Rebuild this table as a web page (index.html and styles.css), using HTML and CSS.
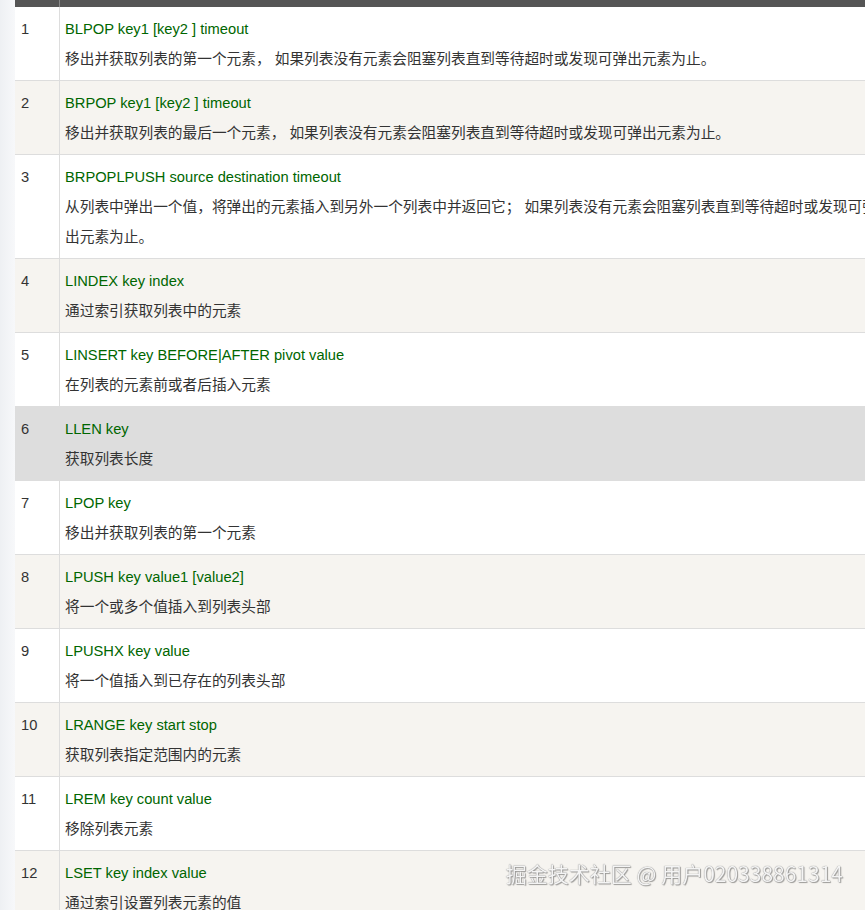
FILE: index.html
```html
<!DOCTYPE html>
<html lang="zh-CN">
<head>
    <meta charset="UTF-8">
    <meta name="viewport" content="width=device-width, initial-scale=1.0">
    <title>Redis 列表命令</title>
    <link rel="stylesheet" href="styles.css">
</head>
<body>
    <div class="page">
        <table class="reference">
            <thead>
                <tr>
                    <th class="num"></th>
                    <th></th>
                </tr>
            </thead>
            <tbody>
                <tr>
                    <td class="num">1</td>
                    <td><a class="cmd">BLPOP key1 [key2 ] timeout</a><div class="desc">移出并获取列表的第一个元素， 如果列表没有元素会阻塞列表直到等待超时或发现可弹出元素为止。</div></td>
                </tr>
                <tr>
                    <td class="num">2</td>
                    <td><a class="cmd">BRPOP key1 [key2 ] timeout</a><div class="desc">移出并获取列表的最后一个元素， 如果列表没有元素会阻塞列表直到等待超时或发现可弹出元素为止。</div></td>
                </tr>
                <tr>
                    <td class="num">3</td>
                    <td><a class="cmd">BRPOPLPUSH source destination timeout</a><div class="desc">从列表中弹出一个值，将弹出的元素插入到另外一个列表中并返回它； 如果列表没有元素会阻塞列表直到等待超时或发现可弹出元素为止。</div></td>
                </tr>
                <tr>
                    <td class="num">4</td>
                    <td><a class="cmd">LINDEX key index</a><div class="desc">通过索引获取列表中的元素</div></td>
                </tr>
                <tr>
                    <td class="num">5</td>
                    <td><a class="cmd">LINSERT key BEFORE|AFTER pivot value</a><div class="desc">在列表的元素前或者后插入元素</div></td>
                </tr>
                <tr class="hover">
                    <td class="num">6</td>
                    <td><a class="cmd">LLEN key</a><div class="desc">获取列表长度</div></td>
                </tr>
                <tr>
                    <td class="num">7</td>
                    <td><a class="cmd">LPOP key</a><div class="desc">移出并获取列表的第一个元素</div></td>
                </tr>
                <tr>
                    <td class="num">8</td>
                    <td><a class="cmd">LPUSH key value1 [value2]</a><div class="desc">将一个或多个值插入到列表头部</div></td>
                </tr>
                <tr>
                    <td class="num">9</td>
                    <td><a class="cmd">LPUSHX key value</a><div class="desc">将一个值插入到已存在的列表头部</div></td>
                </tr>
                <tr>
                    <td class="num">10</td>
                    <td><a class="cmd">LRANGE key start stop</a><div class="desc">获取列表指定范围内的元素</div></td>
                </tr>
                <tr>
                    <td class="num">11</td>
                    <td><a class="cmd">LREM key count value</a><div class="desc">移除列表元素</div></td>
                </tr>
                <tr>
                    <td class="num">12</td>
                    <td><a class="cmd">LSET key index value</a><div class="desc">通过索引设置列表元素的值</div></td>
                </tr>
            </tbody>
        </table>
    </div>
    <div class="watermark">掘金技术社区 @ 用户020338861314</div>
</body>
</html>
```

FILE: styles.css
```css
html, body {
    margin: 0;
    height: 100%;
    overflow: hidden;
}

body {
    background: linear-gradient(to right, #eef0f3, #f7f8fa 15px);
    font-family: "Liberation Sans", "Noto Sans CJK SC", sans-serif;
    font-size: 14.7px;
    color: #333;
}

.page {
    padding-left: 15px;
}

.reference {
    width: 876px;
    border-collapse: collapse;
    background: #fff;
}

.reference th {
    height: 7px;
    padding: 0;
    background: #555;
    border-right: 1px solid #888;
}

.reference td {
    padding: 7px 5px 6px;
    line-height: 30px;
    vertical-align: top;
    text-align: left;
    border-bottom: 1px solid #ddd;
    border-right: 1px solid #ddd;
}

.reference .num {
    width: 33px;
    padding-left: 6px;
}

.reference tbody tr:nth-child(even) {
    background: #f6f4f0;
}

.reference tbody tr.hover {
    background: #ddd;
}

.cmd {
    color: #006600;
    text-decoration: none;
}

.desc {
    color: #333;
}

.watermark {
    position: fixed;
    right: 22px;
    bottom: 22px;
    font-family: "Noto Sans CJK SC", sans-serif;
    font-size: 21px;
    color: #f4f4f4;
    text-shadow: 0 0 1px #666, 1px 1px 1px rgba(0, 0, 0, 0.35);
}
```
